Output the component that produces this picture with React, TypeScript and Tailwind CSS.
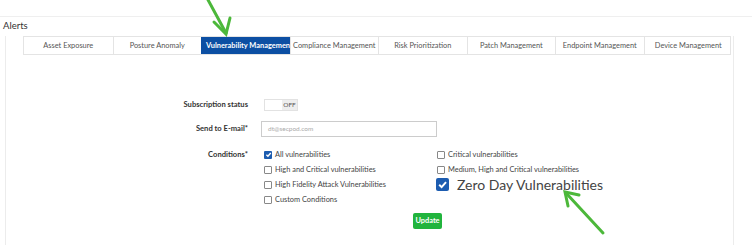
import React from 'react';

const tabs = [
  'Asset Exposure',
  'Posture Anomaly',
  'Vulnerability Management',
  'Compliance Management',
  'Risk Prioritization',
  'Patch Management',
  'Endpoint Management',
  'Device Management',
];

function Box({ checked, big }: { checked?: boolean; big?: boolean }) {
  if (checked) {
    return (
      <span
        className={
          big
            ? 'flex h-[13px] w-[13px] items-center justify-center rounded-[2px] bg-[#1c5cb0]'
            : 'flex h-[8px] w-[8px] items-center justify-center rounded-[1px] bg-[#1c5cb0]'
        }
      >
        <svg viewBox="0 0 10 10" className={big ? 'h-[11px] w-[11px]' : 'h-[7px] w-[7px]'}>
          <path d="M2 5.2 L4.2 7.4 L8.2 2.8" fill="none" stroke="white" strokeWidth={big ? 1.8 : 2} />
        </svg>
      </span>
    );
  }
  return <span className="block h-[8px] w-[8px] rounded-[1px] border border-[#888] bg-white" />;
}

function Check({ label, checked }: { label: string; checked?: boolean }) {
  return (
    <div className="flex h-[15px] items-center gap-[3px] whitespace-nowrap text-[7.4px] text-[#444]">
      <Box checked={checked} />
      <span>{label}</span>
    </div>
  );
}

export default function App() {
  return (
    <div
      className="relative h-[245px] w-[752px] overflow-hidden bg-white text-[#333]"
      style={{ fontFamily: 'Lato, "Liberation Sans", sans-serif' }}
    >
      <div className="h-[17px] border-b border-[#efefef]" />
      <div className="flex h-[19px] items-center pl-[3px] text-[9.5px] text-[#333]">Alerts</div>

      <div className="ml-[5px] mr-[18px] h-[210px] border-x border-[#ececec]">
        {/* Tabs */}
        <div className="ml-[17px] flex h-[19px] w-[708px] border border-[#e4e4e4]">
          {tabs.map((t, i) => (
            <div
              key={t}
              className={
                i === 2
                  ? 'flex w-[88.5px] shrink-0 items-center overflow-hidden whitespace-nowrap bg-[#0c4fa3] pl-[5px] text-[7.4px] font-bold text-white'
                  : 'flex w-[88.5px] shrink-0 items-center justify-center overflow-hidden whitespace-nowrap border-l border-[#e4e4e4] text-[7.4px] text-[#555] first:border-l-0'
              }
            >
              {t}
            </div>
          ))}
        </div>

        {/* Form */}
        <div className="ml-[144px] mt-[44px] flex flex-col text-[7.6px]">
          <div className="flex h-[12px] items-center gap-[16px]">
            <div className="w-[98px] text-right font-bold text-[#333]">Subscription status</div>
            <div className="flex h-[12px] w-[34px] border border-[#e2e2e2]">
              <span className="w-[17px] bg-white" />
              <span className="flex flex-1 items-center justify-center bg-[#eeeeee] text-[6.5px] text-[#555]">OFF</span>
            </div>
          </div>

          <div className="mt-[10px] flex h-[16px] items-center gap-[13px]">
            <div className="w-[98px] text-right font-bold text-[#333]">Send to E-mail*</div>
            <div className="flex h-[16px] w-[176px] items-center border border-[#ccc] pl-[6px] text-[6.5px] text-[#aaa]">
              dt@secpod.com
            </div>
          </div>

          <div className="mt-[10px] flex gap-[16px]">
            <div className="flex h-[15px] w-[98px] items-center justify-end font-bold text-[#333]">Conditions*</div>
            <div className="grid grid-cols-[173px_200px]">
              <div className="flex flex-col">
                <Check label="All vulnerabilities" checked />
                <Check label="High and Critical vulnerabilities" />
                <Check label="High Fidelity Attack Vulnerabilities" />
                <Check label="Custom Conditions" />
              </div>
              <div className="flex flex-col">
                <Check label="Critical vulnerabilities" />
                <Check label="Medium, High and Critical vulnerabilities" />
                <div className="-ml-[1px] flex h-[15px] items-center gap-[8px] whitespace-nowrap text-[14px] text-[#444]">
                  <Box checked big />
                  <span>Zero Day Vulnerabilities</span>
                </div>
              </div>
            </div>
          </div>

          <div className="ml-[263px] mt-[6px] flex h-[16px] w-[29px] items-center justify-center rounded-[2px] bg-[#21b43d] text-[7.4px] font-bold text-white">
            Update
          </div>
        </div>
      </div>

      {/* annotation arrows */}
      <svg className="pointer-events-none absolute left-0 top-0" width="752" height="245">
        <g stroke="#4cb83a" strokeWidth="3" strokeLinecap="round" fill="none">
          <path d="M207 -2 L226 33" />
          <path d="M214 22 L226 34 L230 18" />
          <path d="M603 233 L566 193" />
          <path d="M579 195 L565 192 L568 206" />
        </g>
      </svg>
    </div>
  );
}
